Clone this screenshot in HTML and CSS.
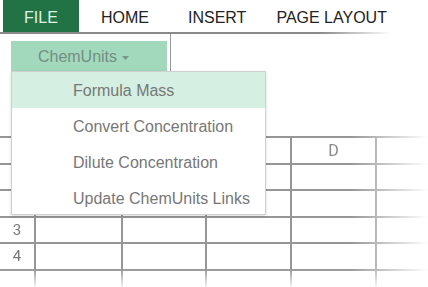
FILE: index.html
```html
<!DOCTYPE html>
<html>
<head>
  <meta name="viewport" content="width=device-width, initial-scale=1.0">
  <title>ChemUnits</title>
  <link rel="stylesheet" href="styles.css">
</head>
<body>
  <!-- Ribbon tabs -->
  <div class="tabs">
    <div class="tab tab-active">FILE</div>
    <div class="tab tab-home">HOME</div>
    <div class="tab tab-insert">INSERT</div>
    <div class="tab tab-layout">PAGE LAYOUT</div>
  </div>

  <!-- Ribbon body -->
  <div class="ribbon">
    <div class="ribbon-group">
      <button class="addon-button" type="button">
        ChemUnits
        <svg class="caret" width="7" height="4" viewBox="0 0 7 4"><polygon points="0,0 7,0 3.5,4" fill="#7a9687"/></svg>
      </button>
    </div>
  </div>

  <!-- Sheet -->
  <div class="sheet">
    <div class="row row-head">
      <div class="cell cell-num"></div>
      <div class="cell"></div>
      <div class="cell"></div>
      <div class="cell"></div>
      <div class="cell">D</div>
      <div class="cell"></div>
    </div>
    <div class="row">
      <div class="cell cell-num">1</div>
      <div class="cell"></div><div class="cell"></div><div class="cell"></div><div class="cell"></div><div class="cell"></div>
    </div>
    <div class="row">
      <div class="cell cell-num">2</div>
      <div class="cell"></div><div class="cell"></div><div class="cell"></div><div class="cell"></div><div class="cell"></div>
    </div>
    <div class="row">
      <div class="cell cell-num">3</div>
      <div class="cell"></div><div class="cell"></div><div class="cell"></div><div class="cell"></div><div class="cell"></div>
    </div>
    <div class="row">
      <div class="cell cell-num">4</div>
      <div class="cell"></div><div class="cell"></div><div class="cell"></div><div class="cell"></div><div class="cell"></div>
    </div>
    <div class="row row-last">
      <div class="cell cell-num"></div>
      <div class="cell"></div><div class="cell"></div><div class="cell"></div><div class="cell"></div><div class="cell"></div>
    </div>
  </div>

  <!-- Add-on dropdown menu -->
  <div class="addon-menu">
    <div class="menu-item menu-item-active">Formula Mass</div>
    <div class="menu-item">Convert Concentration</div>
    <div class="menu-item">Dilute Concentration</div>
    <div class="menu-item">Update ChemUnits Links</div>
  </div>
</body>
</html>
```

FILE: styles.css
```css
body {
  margin: 0;
  width: 428px;
  height: 287px;
  overflow: hidden;
  background-color: #fff;
  font-family: "Liberation Sans", Arial, sans-serif;
  position: relative;
}

/* Tabs */
.tabs {
  display: flex;
  height: 32px;
  border-bottom: 2px solid transparent;
  border-image: linear-gradient(to right, #8a8a8a 320px, rgba(138, 138, 138, 0) 390px) 1;
}

.tab {
  display: flex;
  align-items: center;
  padding-top: 3px;
  box-sizing: border-box;
  font-size: 16px;
  color: #222;
}

.tab-active {
  margin-left: 3px;
  width: 76px;
  justify-content: center;
  background-color: #217346;
  color: #dff3e6;
}

.tab-home {
  margin-left: 22px;
}

.tab-insert {
  margin-left: 39px;
}

.tab-layout {
  margin-left: 30px;
}

/* Ribbon */
.ribbon {
  height: 102px;
}

.ribbon-group {
  width: 171px;
  height: 100%;
  border-right: 1px solid #999;
  padding-top: 7px;
  box-sizing: border-box;
}

.addon-button {
  display: flex;
  align-items: center;
  justify-content: center;
  gap: 5px;
  margin-left: 11px;
  width: 156px;
  height: 30px;
  border: none;
  padding: 2px 11px 0 0;
  background-color: #a2d9bd;
  color: #728f80;
  font-family: "Liberation Sans", Arial, sans-serif;
  font-size: 16px;
}

.caret {
  margin-top: 2px;
}

/* Sheet */
.sheet {
  -webkit-mask-image: linear-gradient(to right, #000 350px, rgba(0, 0, 0, 0) 428px);
  mask-image: linear-gradient(to right, #000 350px, rgba(0, 0, 0, 0) 428px);
}

.row {
  display: grid;
  grid-template-columns: 34px 87px 84px 85px 85px 1fr;
  height: 26.5px;
  border-top: 2px solid #969696;
  box-sizing: border-box;
}

.row-last {
  height: 20px;
  -webkit-mask-image: linear-gradient(to bottom, #000, rgba(0, 0, 0, 0));
  mask-image: linear-gradient(to bottom, #000, rgba(0, 0, 0, 0));
}

.cell {
  border-left: 2px solid #969696;
  display: flex;
  align-items: center;
  justify-content: center;
  font-family: Roboto, "Liberation Sans", sans-serif;
  font-size: 16px;
  color: #888;
}

.cell-num {
  border-left: none;
  font-size: 15px;
  color: #777;
}

/* Dropdown menu */
.addon-menu {
  position: absolute;
  top: 71px;
  left: 11px;
  width: 255px;
  background-color: #fff;
  border: 1px solid #d0d0d0;
  box-sizing: border-box;
  box-shadow: 0 1px 3px rgba(0, 0, 0, 0.15);
}

.menu-item {
  height: 36px;
  line-height: 38px;
  padding-left: 61px;
  font-size: 16px;
  color: #777;
}

.menu-item:last-child {
  height: 34px;
}

.menu-item-active {
  background-color: #d5efe2;
}
```
